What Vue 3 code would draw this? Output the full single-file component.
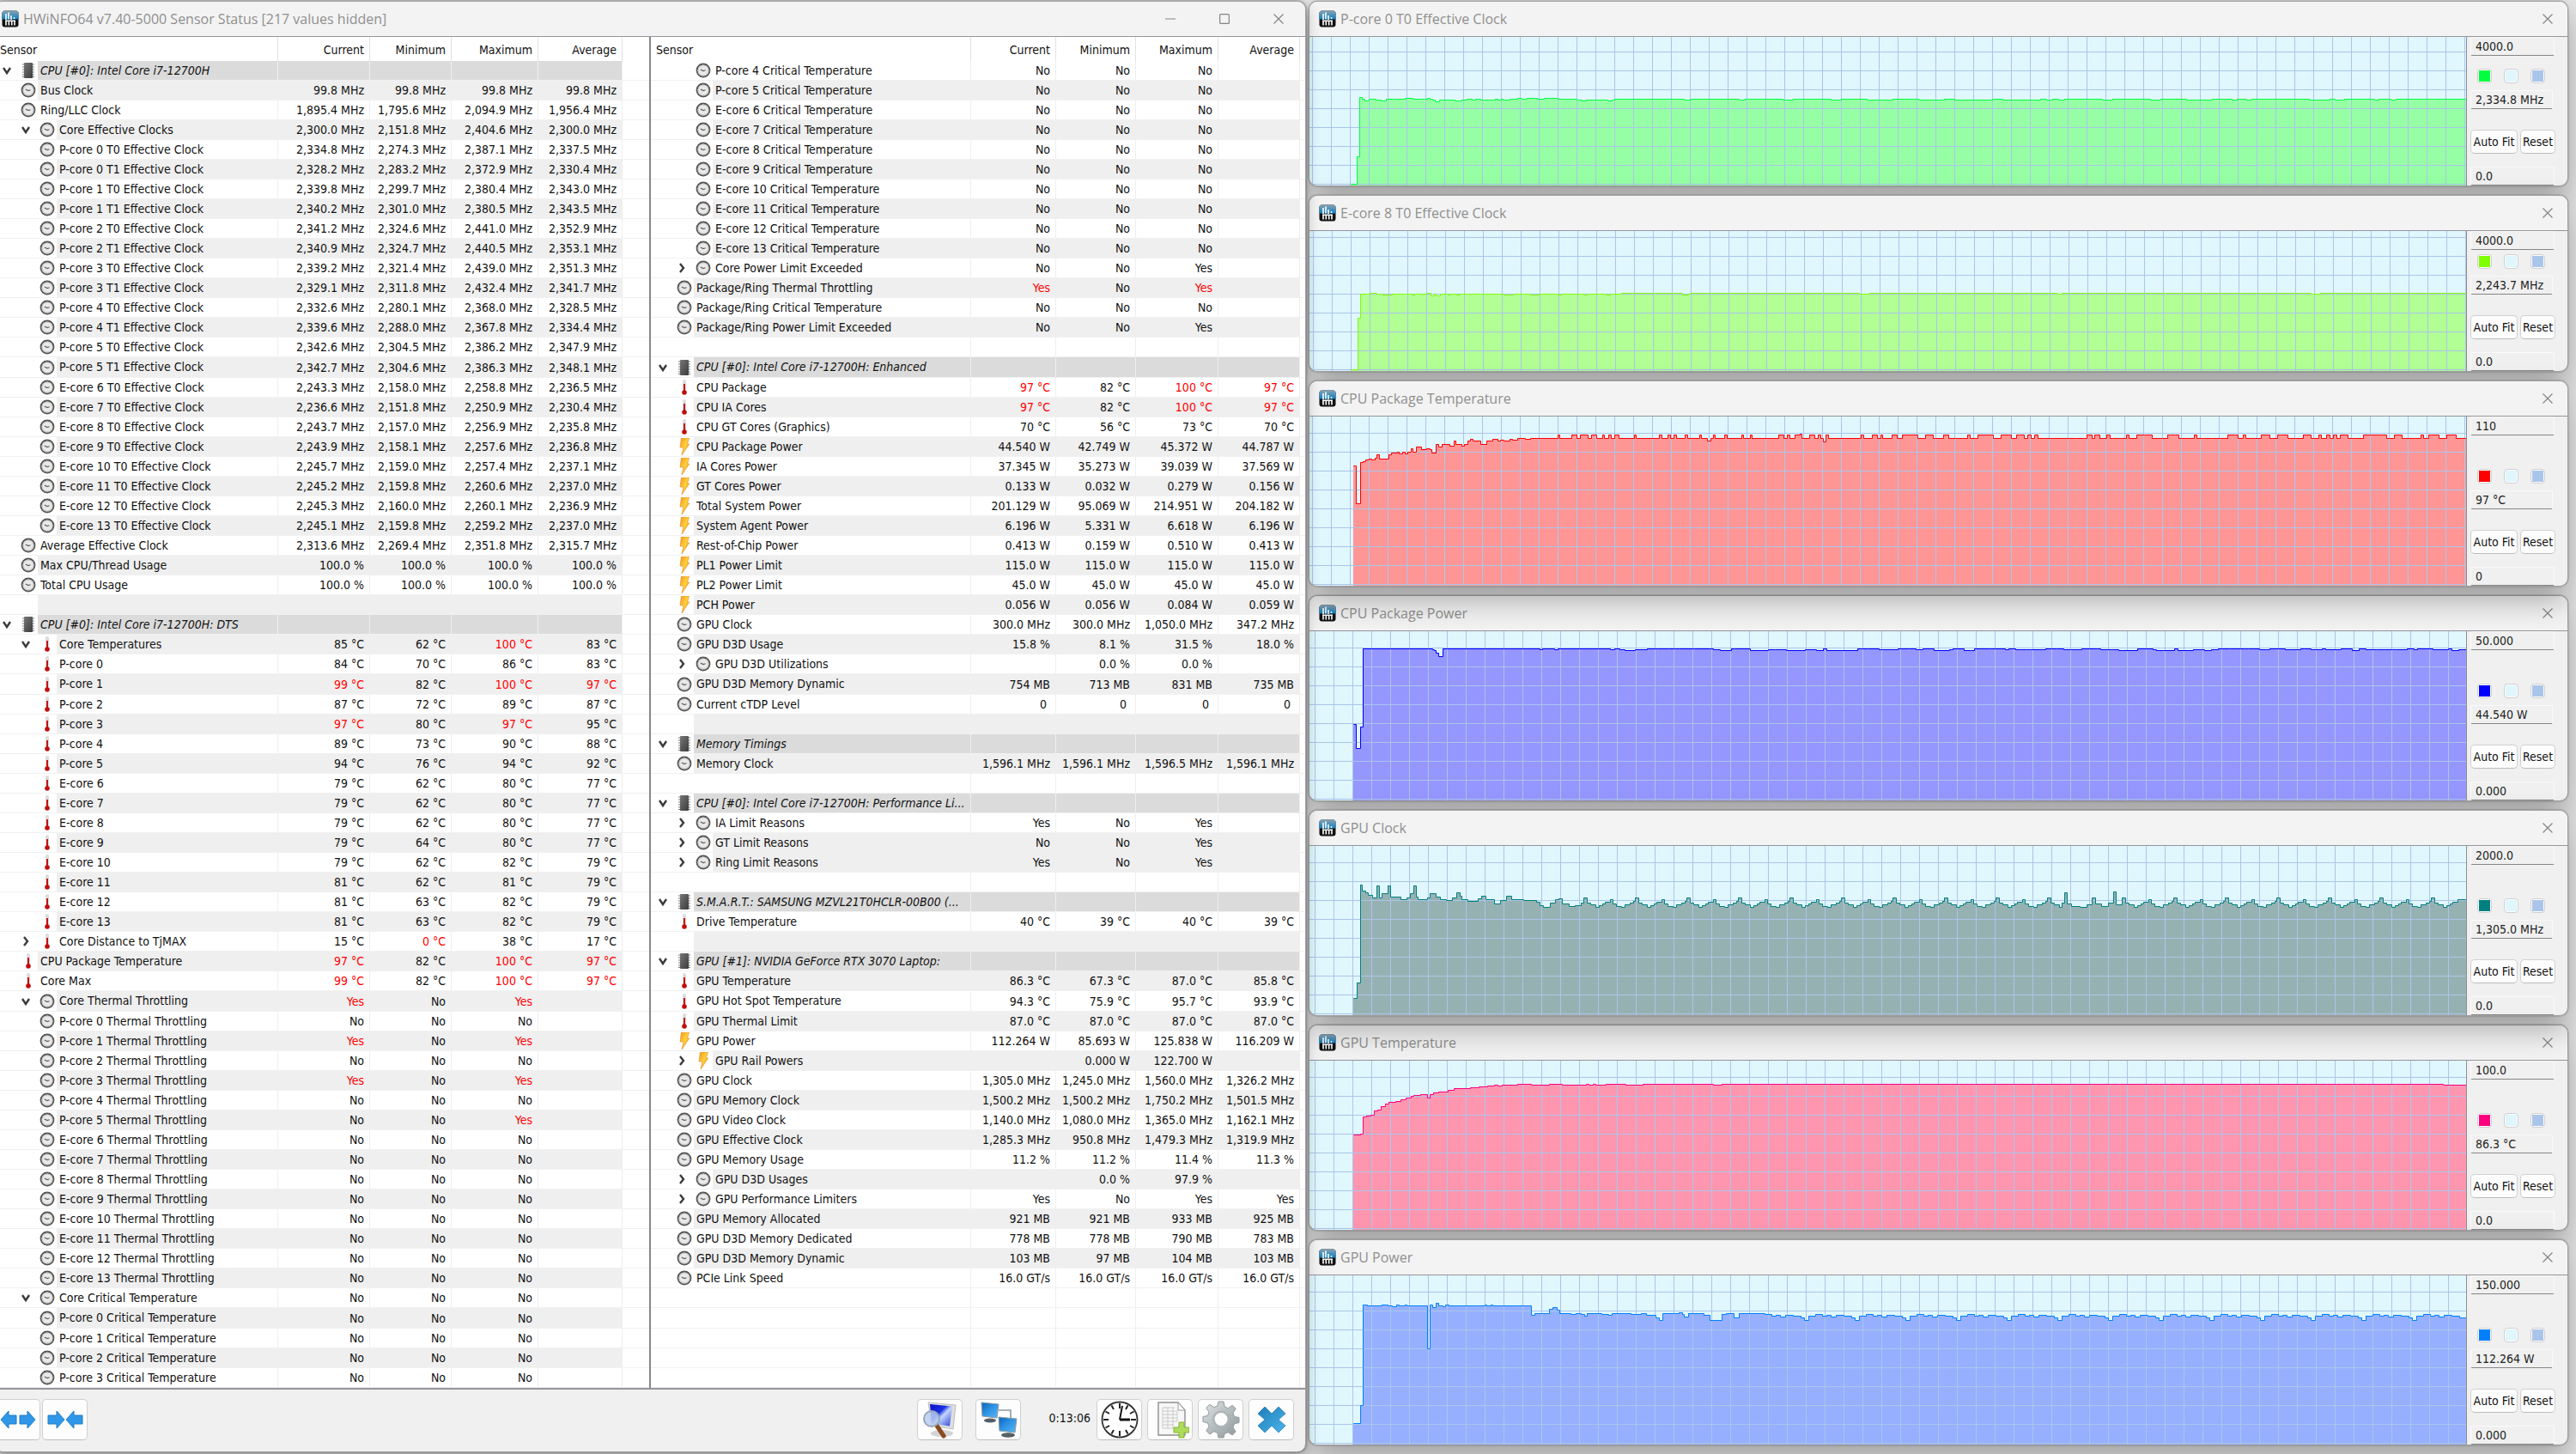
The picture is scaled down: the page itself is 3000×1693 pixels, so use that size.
<script setup>
const ICONS = { c: 'clock', t: 'thermo', b: 'bolt', h: 'chip' }

// Row notation: level, toggle (v open, > closed, - none), icon, label | values; "!" marks a limit value,
// "=" keeps the stripe of the row before.
function parse(lines) {
  let shade = true
  return lines.map((line) => {
    const repeat = line[0] === '='
    if (!repeat) shade = !shade
    const text = repeat ? line.slice(1) : line
    if (!text) return { empty: true, shade, values: ['', '', '', ''] }
    const [head, ...cells] = text.split('|')
    const values = [0, 1, 2, 3].map((i) => cells[i] || '')
    return {
      level: Number(head[0]),
      toggle: head[1],
      icon: ICONS[head[2]],
      section: head[2] === 'h',
      label: head.slice(4),
      shade,
      values
    }
  })
}

const no = '|No|No|No'
const leftRows = parse([
  '0vh CPU [#0]: Intel Core i7-12700H',
  '0-c Bus Clock|99.8 MHz|99.8 MHz|99.8 MHz|99.8 MHz',
  '0-c Ring/LLC Clock|1,895.4 MHz|1,795.6 MHz|2,094.9 MHz|1,956.4 MHz',
  '1vc Core Effective Clocks|2,300.0 MHz|2,151.8 MHz|2,404.6 MHz|2,300.0 MHz',
  '1-c P-core 0 T0 Effective Clock|2,334.8 MHz|2,274.3 MHz|2,387.1 MHz|2,337.5 MHz',
  '1-c P-core 0 T1 Effective Clock|2,328.2 MHz|2,283.2 MHz|2,372.9 MHz|2,330.4 MHz',
  '1-c P-core 1 T0 Effective Clock|2,339.8 MHz|2,299.7 MHz|2,380.4 MHz|2,343.0 MHz',
  '1-c P-core 1 T1 Effective Clock|2,340.2 MHz|2,301.0 MHz|2,380.5 MHz|2,343.5 MHz',
  '1-c P-core 2 T0 Effective Clock|2,341.2 MHz|2,324.6 MHz|2,441.0 MHz|2,352.9 MHz',
  '1-c P-core 2 T1 Effective Clock|2,340.9 MHz|2,324.7 MHz|2,440.5 MHz|2,353.1 MHz',
  '1-c P-core 3 T0 Effective Clock|2,339.2 MHz|2,321.4 MHz|2,439.0 MHz|2,351.3 MHz',
  '1-c P-core 3 T1 Effective Clock|2,329.1 MHz|2,311.8 MHz|2,432.4 MHz|2,341.7 MHz',
  '1-c P-core 4 T0 Effective Clock|2,332.6 MHz|2,280.1 MHz|2,368.0 MHz|2,328.5 MHz',
  '1-c P-core 4 T1 Effective Clock|2,339.6 MHz|2,288.0 MHz|2,367.8 MHz|2,334.4 MHz',
  '1-c P-core 5 T0 Effective Clock|2,342.6 MHz|2,304.5 MHz|2,386.2 MHz|2,347.9 MHz',
  '1-c P-core 5 T1 Effective Clock|2,342.7 MHz|2,304.6 MHz|2,386.3 MHz|2,348.1 MHz',
  '1-c E-core 6 T0 Effective Clock|2,243.3 MHz|2,158.0 MHz|2,258.8 MHz|2,236.5 MHz',
  '1-c E-core 7 T0 Effective Clock|2,236.6 MHz|2,151.8 MHz|2,250.9 MHz|2,230.4 MHz',
  '1-c E-core 8 T0 Effective Clock|2,243.7 MHz|2,157.0 MHz|2,256.9 MHz|2,235.8 MHz',
  '1-c E-core 9 T0 Effective Clock|2,243.9 MHz|2,158.1 MHz|2,257.6 MHz|2,236.8 MHz',
  '1-c E-core 10 T0 Effective Clock|2,245.7 MHz|2,159.0 MHz|2,257.4 MHz|2,237.1 MHz',
  '1-c E-core 11 T0 Effective Clock|2,245.2 MHz|2,159.8 MHz|2,260.6 MHz|2,237.0 MHz',
  '1-c E-core 12 T0 Effective Clock|2,245.3 MHz|2,160.0 MHz|2,260.1 MHz|2,236.9 MHz',
  '1-c E-core 13 T0 Effective Clock|2,245.1 MHz|2,159.8 MHz|2,259.2 MHz|2,237.0 MHz',
  '0-c Average Effective Clock|2,313.6 MHz|2,269.4 MHz|2,351.8 MHz|2,315.7 MHz',
  '0-c Max CPU/Thread Usage|100.0 %|100.0 %|100.0 %|100.0 %',
  '0-c Total CPU Usage|100.0 %|100.0 %|100.0 %|100.0 %',
  '',
  '0vh CPU [#0]: Intel Core i7-12700H: DTS',
  '1vt Core Temperatures|85 °C|62 °C|!100 °C|83 °C',
  '1-t P-core 0|84 °C|70 °C|86 °C|83 °C',
  '1-t P-core 1|!99 °C|82 °C|!100 °C|!97 °C',
  '1-t P-core 2|87 °C|72 °C|89 °C|87 °C',
  '1-t P-core 3|!97 °C|80 °C|!97 °C|95 °C',
  '1-t P-core 4|89 °C|73 °C|90 °C|88 °C',
  '1-t P-core 5|94 °C|76 °C|94 °C|92 °C',
  '1-t E-core 6|79 °C|62 °C|80 °C|77 °C',
  '1-t E-core 7|79 °C|62 °C|80 °C|77 °C',
  '1-t E-core 8|79 °C|62 °C|80 °C|77 °C',
  '1-t E-core 9|79 °C|64 °C|80 °C|77 °C',
  '1-t E-core 10|79 °C|62 °C|82 °C|79 °C',
  '1-t E-core 11|81 °C|62 °C|81 °C|79 °C',
  '1-t E-core 12|81 °C|63 °C|82 °C|79 °C',
  '1-t E-core 13|81 °C|63 °C|82 °C|79 °C',
  '1>t Core Distance to TjMAX|15 °C|!0 °C|38 °C|17 °C',
  '0-t CPU Package Temperature|!97 °C|82 °C|!100 °C|!97 °C',
  '0-t Core Max|!99 °C|82 °C|!100 °C|!97 °C',
  '1vc Core Thermal Throttling|!Yes|No|!Yes',
  '1-c P-core 0 Thermal Throttling' + no,
  '1-c P-core 1 Thermal Throttling|!Yes|No|!Yes',
  '1-c P-core 2 Thermal Throttling' + no,
  '1-c P-core 3 Thermal Throttling|!Yes|No|!Yes',
  '1-c P-core 4 Thermal Throttling' + no,
  '1-c P-core 5 Thermal Throttling|No|No|!Yes',
  ...[6, 7, 8, 9, 10, 11, 12, 13].map((n) => `1-c E-core ${n} Thermal Throttling${no}`),
  '1vc Core Critical Temperature' + no,
  ...[0, 1, 2, 3].map((n) => `1-c P-core ${n} Critical Temperature${no}`)
])

const rightRows = parse([
  ...[4, 5].map((n) => `1-c P-core ${n} Critical Temperature${no}`),
  ...[6, 7, 8, 9, 10, 11, 12, 13].map((n) => `1-c E-core ${n} Critical Temperature${no}`),
  '1>c Core Power Limit Exceeded|No|No|Yes',
  '0-c Package/Ring Thermal Throttling|!Yes|No|!Yes',
  '0-c Package/Ring Critical Temperature' + no,
  '0-c Package/Ring Power Limit Exceeded|No|No|Yes',
  '',
  '0vh CPU [#0]: Intel Core i7-12700H: Enhanced',
  '0-t CPU Package|!97 °C|82 °C|!100 °C|!97 °C',
  '0-t CPU IA Cores|!97 °C|82 °C|!100 °C|!97 °C',
  '0-t CPU GT Cores (Graphics)|70 °C|56 °C|73 °C|70 °C',
  '0-b CPU Package Power|44.540 W|42.749 W|45.372 W|44.787 W',
  '0-b IA Cores Power|37.345 W|35.273 W|39.039 W|37.569 W',
  '0-b GT Cores Power|0.133 W|0.032 W|0.279 W|0.156 W',
  '0-b Total System Power|201.129 W|95.069 W|214.951 W|204.182 W',
  '0-b System Agent Power|6.196 W|5.331 W|6.618 W|6.196 W',
  '0-b Rest-of-Chip Power|0.413 W|0.159 W|0.510 W|0.413 W',
  '0-b PL1 Power Limit|115.0 W|115.0 W|115.0 W|115.0 W',
  '0-b PL2 Power Limit|45.0 W|45.0 W|45.0 W|45.0 W',
  '0-b PCH Power|0.056 W|0.056 W|0.084 W|0.059 W',
  '0-c GPU Clock|300.0 MHz|300.0 MHz|1,050.0 MHz|347.2 MHz',
  '0-c GPU D3D Usage|15.8 %|8.1 %|31.5 %|18.0 %',
  '1>c GPU D3D Utilizations||0.0 %|0.0 %',
  '0-c GPU D3D Memory Dynamic|754 MB|713 MB|831 MB|735 MB',
  '0-c Current cTDP Level|0\u00a0|0\u00a0|0\u00a0|0\u00a0',
  '',
  '0vh Memory Timings',
  '0-c Memory Clock|1,596.1 MHz|1,596.1 MHz|1,596.5 MHz|1,596.1 MHz',
  '',
  '0vh CPU [#0]: Intel Core i7-12700H: Performance Li...',
  '1>c IA Limit Reasons|Yes|No|Yes',
  '1>c GT Limit Reasons|No|No|Yes',
  '=1>c Ring Limit Reasons|Yes|No|Yes',
  '',
  '0vh S.M.A.R.T.: SAMSUNG MZVL21T0HCLR-00B00 (...',
  '0-t Drive Temperature|40 °C|39 °C|40 °C|39 °C',
  '',
  '0vh GPU [#1]: NVIDIA GeForce RTX 3070 Laptop:',
  '0-t GPU Temperature|86.3 °C|67.3 °C|87.0 °C|85.8 °C',
  '0-t GPU Hot Spot Temperature|94.3 °C|75.9 °C|95.7 °C|93.9 °C',
  '0-t GPU Thermal Limit|87.0 °C|87.0 °C|87.0 °C|87.0 °C',
  '0-b GPU Power|112.264 W|85.693 W|125.838 W|116.209 W',
  '1>b GPU Rail Powers||0.000 W|122.700 W',
  '0-c GPU Clock|1,305.0 MHz|1,245.0 MHz|1,560.0 MHz|1,326.2 MHz',
  '0-c GPU Memory Clock|1,500.2 MHz|1,500.2 MHz|1,750.2 MHz|1,501.5 MHz',
  '0-c GPU Video Clock|1,140.0 MHz|1,080.0 MHz|1,365.0 MHz|1,162.1 MHz',
  '0-c GPU Effective Clock|1,285.3 MHz|950.8 MHz|1,479.3 MHz|1,319.9 MHz',
  '0-c GPU Memory Usage|11.2 %|11.2 %|11.4 %|11.3 %',
  '1>c GPU D3D Usages||0.0 %|97.9 %',
  '1>c GPU Performance Limiters|Yes|No|Yes|Yes',
  '0-c GPU Memory Allocated|921 MB|921 MB|933 MB|925 MB',
  '0-c GPU D3D Memory Dedicated|778 MB|778 MB|790 MB|783 MB',
  '0-c GPU D3D Memory Dynamic|103 MB|97 MB|104 MB|103 MB',
  '0-c PCIe Link Speed|16.0 GT/s|16.0 GT/s|16.0 GT/s|16.0 GT/s'
])
// Unused rows at the foot of the list show grid lines only.
const spare = Array.from({ length: 5 }, () => ({ empty: true, shade: false, values: ['', '', '', ''] }))

const panes = [
  { id: 'left', rows: leftRows },
  { id: 'right', rows: [...rightRows, ...spare] }
]
const columns = ['Current', 'Minimum', 'Maximum', 'Average']

// Samples of a steady reading: [x, y] steps that move between nearby levels.
function steady(from, to, levels, gaps, seed) {
  const out = []
  let x = from
  let s = seed
  while (x < to) {
    s = (s * 1103 + 12345) % 65536
    out.push([x, levels[s % levels.length]])
    x += gaps[(s >> 5) % gaps.length]
  }
  return out
}
// A shape that repeats at a fixed period.
function waves(from, to, shape, period) {
  const out = []
  for (let x = from; x < to; x += period) {
    for (const [dx, y] of shape) if (x + dx < to) out.push([x + dx, y])
  }
  return out
}
const pairs = (text) => text.split(' ').map((p) => p.split(',').map(Number))

const W = 1347
function build(points, h) {
  let line = `M${points[0][0]} ${points[0][1]}`
  for (let i = 1; i < points.length; i++) line += `H${points[i][0]}V${points[i][1]}`
  line += `H${W}`
  return { line, area: `${line}V${h}H${points[0][0]}Z` }
}

const clockWave = [[0, 60], [4, 66], [8, 68], [14, 71], [18, 69], [22, 67], [25, 65], [31, 62], [34, 67], [38, 70], [44, 71], [48, 68], [54, 66], [58, 64]]

const charts = [
  {
    title: 'P-core 0 T0 Effective Clock', size: 'medium', h: 173, top: '4000.0', now: '2,334.8 MHz', low: '0.0',
    color: '#00ff40', fill: '#96ffa5', shift: 1,
    points: [
      ...pairs('48,171 55,139 58,70 61,72 64,74 69,72 77,73 83,74 89,72 111,71 120,72 137,71 140,72 143,73 146,75 151,73 169,74 177,73 183,72 189,73 193,72 199,73 216,72 219,73 223,72 225,73 233,72 242,71 247,72 253,71 265,72 273,71 289,72 311,73 317,74 322,73 347,74 352,73 355,72 436,73 444,72'),
      ...steady(500, 1060, [72, 72, 73, 72], [7, 12, 30, 44], 11),
      ...pairs('1074,73 1080,72 1091,73 1097,72 1164,73 1188,72 1194,73 1205,72 1240,73 1245,72 1259,73 1265,72')
    ]
  },
  {
    title: 'E-core 8 T0 Effective Clock', size: 'short', h: 163, top: '4000.0', now: '2,243.7 MHz', low: '0.0',
    color: '#80ff00', fill: '#b2ff95', shift: 0,
    points: pairs('49,161 56,101 59,73 70,72 78,73 85,74 96,73 119,74 122,73 136,72 141,75 145,73 147,75 152,73 161,74 164,73 171,74 175,73 226,74 237,73 257,74 267,73 289,74 293,73 319,74 323,73 346,74 350,73 363,72 434,74 441,73 443,72 640,73 652,72 870,73 876,72 1166,73 1177,72')
  },
  {
    title: 'CPU Package Temperature', size: 'tall', h: 197, top: '110', now: '97 °C', low: '0',
    color: '#ff0000', fill: '#ff9696', shift: 1,
    points: [
      ...pairs('51,57 54,101 59,53 62,52 65,50 69,49 72,50 76,48 78,44 81,49 92,44 95,42 102,41 104,43 108,41 111,43 114,41 118,37 120,41 124,35 130,38 136,37 140,38 142,42 147,32 150,35 154,32 163,34 168,28 170,32 177,34 180,32 184,28 187,26 190,28 199,32 206,28 213,26 219,28 222,27 226,28 233,26 236,27 242,25 251,26 257,25 289,21 291,25 305,21 311,25 315,21 324,25 328,21 334,25 341,21 343,25 348,21 351,25 355,21 360,25 378,21 380,25 407,21 410,25 417,21 420,25 424,21 427,25 437,21 440,25 454,21 456,25 463,28 467,25 470,21 472,25 483,21 486,25 503,21 505,25 513,21 515,25 546,21 552,25 556,21 559,25 565,21 571,20 573,25 582,21 588,25 592,21 595,25 598,29 601,21 604,25 642,21 645,25 655,21 661,25 665,21 667,25 678,21 684,25'),
      ...steady(690, 1330, [25, 21, 25, 21, 25], [3, 4, 6, 9], 7),
      [1335, 25]
    ]
  },
  {
    title: 'CPU Package Power', size: 'tall', h: 197, top: '50.000', now: '44.540 W', low: '0.000', under: true,
    color: '#0000ff', fill: '#9696ff', shift: 20,
    points: [
      ...pairs('51,108 54,136 59,111 62,20 143,21 145,22 147,25 150,29 155,20 268,21 271,20 285,21 289,20 350,21 355,20 361,21 367,22 379,21 393,20'),
      ...steady(405, 1340, [20, 21, 21, 22, 20], [4, 8, 13, 18], 5)
    ]
  },
  {
    title: 'GPU Clock', size: 'tall', h: 197, top: '2000.0', now: '1,305.0 MHz', low: '0.0',
    color: '#008080', fill: '#96b1b1', shift: 20,
    points: [
      ...pairs('51,177 55,159 59,45 61,52 65,54 68,57 73,60 78,46 81,60 84,55 91,46 94,59 106,62 113,60 117,55 121,46 124,59 126,62 137,60 140,55 147,59 152,62 159,63 166,60 171,54 175,58 177,62 184,64 196,61 200,58 205,62 215,67 222,63 229,58 235,62 249,63 264,65 268,69 272,71 280,66 286,62 290,61 294,67 302,70 309,69 316,66'),
      ...waves(319, 876, clockWave, 60),
      ...pairs('876,66 879,54 882,67 887,70 897,71 905,68 911,60 915,67 922,70 930,66 936,53 939,68'),
      ...waves(946, 1340, clockWave, 60)
    ]
  },
  {
    title: 'GPU Temperature', size: 'tall', h: 197, top: '100.0', now: '86.3 °C', low: '0.0', under: true,
    color: '#ff0080', fill: '#ff96b0', shift: 20,
    points: [
      ...pairs('51,86 59,85 62,65 66,64 71,63 75,58 79,57 83,53 88,50 92,48 100,47 106,45 112,43 118,41 121,40 129,39 137,43 140,39 144,37 150,36 161,34 168,32 187,31 197,30 207,29 215,28 219,29 224,28 242,27 258,28 279,27 294,28 322,27 325,28 330,27 333,28 345,27 368,28 388,27 470,28 480,27'),
      ...steady(560, 1300, [27, 28, 27, 27], [6, 11, 16, 22], 3),
      [1320, 28]
    ]
  },
  {
    title: 'GPU Power', size: 'tall', h: 197, top: '150.000', now: '112.264 W', low: '0.000',
    color: '#0080ff', fill: '#96b0ff', shift: 20,
    points: [
      ...pairs('51,172 59,151 62,34 67,35 84,34 91,35 96,36 101,34 104,35 111,34 113,35 137,85 140,34 143,37 147,32 150,35 155,36 158,34 162,35 204,34 206,35 211,34 213,35 258,46 262,44 279,39 283,37 288,40 291,44 304,45 310,44 316,45 320,47 323,44 340,45 348,46 352,44 374,45 386,44 392,46 403,49 407,52 411,44 430,43 434,45 436,48 441,44 459,46 466,52 480,45 485,44 494,49 500,44'),
      ...waves(530, 1340, [[0, 45], [8, 47], [13, 46], [18, 48], [24, 46], [33, 47], [42, 49], [46, 52], [51, 47]], 59)
    ]
  }
].map((c) => ({ ...c, ...build(c.points, c.h) }))
</script>

<template>
  <div class="desktop">
    <svg class="defs" aria-hidden="true">
      <defs>
        <linearGradient id="g-top" x1="0" y1="0" x2="0" y2="1"><stop offset="0" stop-color="#8aa3b5" /><stop offset="1" stop-color="#0b7fc0" /></linearGradient>
        <linearGradient id="g-chip" x1="0" y1="0" x2="1" y2="1"><stop offset="0" stop-color="#777" /><stop offset="1" stop-color="#3c3c3c" /></linearGradient>
        <linearGradient id="g-bolt" x1="0" y1="0" x2="1" y2="1"><stop offset="0" stop-color="#f7931e" /><stop offset="0.5" stop-color="#ffd23c" /><stop offset="1" stop-color="#e8850c" /></linearGradient>
        <linearGradient id="g-screen" x1="0" y1="0" x2="1" y2="1"><stop offset="0" stop-color="#0a62b8" /><stop offset="0.5" stop-color="#2f95e6" /><stop offset="1" stop-color="#5db8f5" /></linearGradient>
        <linearGradient id="g-navy" x1="0" y1="0" x2="1" y2="1"><stop offset="0" stop-color="#0a12c8" /><stop offset="0.4" stop-color="#1a2fe0" /><stop offset="0.55" stop-color="#c5d6ff" /><stop offset="1" stop-color="#2740d8" /></linearGradient>
        <linearGradient id="g-metal" x1="0" y1="0" x2="1" y2="1"><stop offset="0" stop-color="#dfe3e5" /><stop offset="1" stop-color="#8d9699" /></linearGradient>
        <linearGradient id="g-cross" x1="0" y1="0" x2="1" y2="1"><stop offset="0" stop-color="#1b7db8" /><stop offset="1" stop-color="#4db4ea" /></linearGradient>
      </defs>
      <symbol id="i-logo" viewBox="0 0 20 20">
        <rect x="0.5" y="0.5" width="19" height="19" rx="3" fill="#111" />
        <path d="M0.5 10.5V3.5a3 3 0 0 1 3-3h13a3 3 0 0 1 3 3v7z" fill="url(#g-top)" />
        <path d="M5 4v7M8 2.5v8M11 6v5M14.5 8v2" stroke="#fff" stroke-width="1.6" />
        <path d="M4 12.2h12M5 12v5.500M8.300 12v5.500M11.700 12v5.500M15 12v5.500" stroke="#fff" stroke-width="1.6" />
      </symbol>
      <symbol id="i-clock" viewBox="0 0 18 18">
        <circle cx="9" cy="9" r="7.5" fill="#e9e9e9" stroke="#555" stroke-width="1.8" />
        <circle cx="9" cy="9" r="6" fill="none" stroke="#bbb" stroke-width="0.8" />
        <path d="M5.8 8l3.2 1.6 2.6-.8" fill="none" stroke="#6b5a55" stroke-width="1.2" />
      </symbol>
      <symbol id="i-thermo" viewBox="0 0 18 18">
        <rect x="7" y="0" width="4" height="14" rx="2" fill="#dcdcdc" />
        <rect x="8" y="5" width="2" height="10" fill="#c81414" />
        <circle cx="9" cy="15" r="2.8" fill="#c00d0d" />
      </symbol>
      <symbol id="i-bolt" viewBox="0 0 18 20">
        <path d="M5.500 0h9L12.500 7h2.200L6 20l2-9H4z" fill="url(#g-bolt)" stroke="#e2922a" stroke-width="0.7" />
      </symbol>
      <symbol id="i-chip" viewBox="0 0 18 18">
        <path d="M2 2h14M2 5h14M2 8h14M2 11h14M2 14h14M2 16.5h14" stroke="#777" stroke-width="1.2" />
        <rect x="4" y="0" width="10" height="18" rx="1" fill="url(#g-chip)" />
      </symbol>
      <symbol id="i-open" viewBox="0 0 12 12"><path d="M2 3l4 6 4-6" fill="none" stroke="#3a3a3a" stroke-width="2.4" /></symbol>
      <symbol id="i-closed" viewBox="0 0 12 12"><path d="M4 1l4 5-4 5" fill="none" stroke="#3a3a3a" stroke-width="2.4" /></symbol>
      <symbol id="i-close" viewBox="0 0 12 12"><path d="M0.5 0.5l11 11M11.5 0.5l-11 11" fill="none" stroke="#858585" stroke-width="1.2" /></symbol>
    </svg>

    <section class="window main">
      <header class="titlebar">
        <svg class="app-icon"><use href="#i-logo" /></svg>
        <h1>HWiNFO64 v7.40-5000 Sensor Status [217 values hidden]</h1>
        <button class="wide" aria-label="Minimize"><svg viewBox="0 0 12 12"><path d="M0 6h12" stroke="#858585" stroke-width="1.2" /></svg></button>
        <button class="wide" aria-label="Maximize"><svg viewBox="0 0 12 12"><rect x="0.6" y="0.6" width="10.8" height="10.8" rx="1" fill="none" stroke="#858585" stroke-width="1.2" /></svg></button>
        <button class="wide" aria-label="Close"><svg><use href="#i-close" /></svg></button>
      </header>

      <div class="panes">
        <div v-for="pane in panes" :key="pane.id" class="pane" :class="pane.id">
          <table>
            <colgroup><col class="c-name" /><col class="c-cur" /><col class="c-min" /><col class="c-max" /><col class="c-avg" /><col /></colgroup>
            <thead>
              <tr><th class="first">Sensor</th><th v-for="c in columns" :key="c">{{ c }}</th><th class="rest"></th></tr>
            </thead>
            <tbody>
              <tr v-for="(row, i) in pane.rows" :key="i" :class="{ shade: row.shade, section: row.section }">
                <td class="name">
                  <div class="cell">
                    <span v-if="row.level" class="indent"></span>
                    <span class="toggle">
                      <svg v-if="row.toggle === 'v'"><use href="#i-open" /></svg>
                      <svg v-if="row.toggle === '>'"><use href="#i-closed" /></svg>
                    </span>
                    <span class="icon"><svg v-if="row.icon" :class="row.icon"><use :href="'#i-' + row.icon" /></svg></span>
                    <span class="label">{{ row.label }}</span>
                  </div>
                </td>
                <td v-for="(v, k) in row.values" :key="k" :class="{ hot: v[0] === '!' }">{{ v[0] === '!' ? v.slice(1) : v }}</td>
                <td class="rest"></td>
              </tr>
            </tbody>
          </table>
        </div>
      </div>

      <footer class="toolbar">
        <button class="tight" aria-label="Expand columns">
          <svg viewBox="0 0 44 40" fill="#2f97e8" stroke="#1f7cc6"><path d="M2 20l9-10v5h9v10h-9v5zM42 20l-9-10v5h-9v10h9v5z" /></svg>
        </button>
        <button class="tight" aria-label="Shrink columns">
          <svg viewBox="0 0 44 40" fill="#2f97e8" stroke="#1f7cc6"><path d="M21 20l-9-10v5H2v10h10v5zM23 20l9-10v5h10v10H32v5z" /></svg>
        </button>
        <span class="space"></span>
        <button class="apart" aria-label="System summary">
          <svg viewBox="0 0 44 44">
            <ellipse cx="24" cy="38" rx="13" ry="4" fill="#d4d4d4" />
            <path d="M8 2l32 3-3 28-25-4z" fill="#dedede" stroke="#bdbdbd" />
            <path d="M10 4l26 2.5-3 23-21-3z" fill="url(#g-navy)" />
            <path d="M18 29l8 12" stroke="#8a4b22" stroke-width="5" stroke-linecap="round" />
            <circle cx="12" cy="21" r="9" fill="#b9cdf2" fill-opacity="0.85" stroke="#98a7b8" stroke-width="2" />
          </svg>
        </button>
        <button aria-label="Remote monitoring">
          <svg viewBox="0 0 44 44">
            <path d="M22 11h14v10" fill="none" stroke="#8b9ba2" stroke-width="1.6" />
            <ellipse cx="12" cy="23" rx="7" ry="2.5" fill="#555f66" />
            <path d="M2 2l20 2-2 16-17-2z" fill="url(#g-screen)" stroke="#8d9aa3" />
            <ellipse cx="33" cy="40" rx="8" ry="2.8" fill="#555f66" />
            <path d="M22 19l21 2-2 16-18-2z" fill="url(#g-screen)" stroke="#8d9aa3" />
          </svg>
        </button>
        <time>0:13:06</time>
        <button aria-label="Reset clock">
          <svg viewBox="0 0 44 44">
            <circle cx="22" cy="22" r="20.5" fill="#fff" stroke="#333" stroke-width="1.8" />
            <path d="M22 3v6M22 35v6M3 22h6M35 22h6M12.5 5.5l2.500 4.500M31.5 5.5L29 10M5.5 12.5l4.5 2.5M38.5 12.5L34 15M5.5 31.5L10 29M38.5 31.5L34 29M12.5 38.5L15 34M31.5 38.5L29 34" stroke="#222" stroke-width="2" />
            <path d="M22 22l3-16" stroke="#111" stroke-width="2" /><path d="M22 22h12" stroke="#111" stroke-width="3.2" />
          </svg>
        </button>
        <button aria-label="Log to file">
          <svg viewBox="0 0 44 44">
            <path d="M8 2h23l8 9v29H8z" fill="#f7f7f7" stroke="#8f8f8f" stroke-width="1.4" />
            <path d="M31 2v9h8z" fill="#fff" stroke="#9a9a9a" />
            <path d="M13 8h14M13 12h17M13 16h17M13 20h17M13 24h17M13 28h13M13 32h12M13 8v24M19 8v24M25 8v24M30 12v12" stroke="#c9c9c9" fill="none" />
            <path d="M32 25h6v6h6v6h-6v6h-6v-6h-6v-6h6z" fill="#b0dc5c" stroke="#82b436" />
          </svg>
        </button>
        <button aria-label="Settings">
          <svg viewBox="0 0 44 44">
            <path d="M19 1h6l1.2 6 4 1.7 5-3.4 4 4-3.3 5 1.7 4.2 5.4 1v6l-5.4 1.3-1.7 4.2 3.3 5-4 4-5-3.3-4 1.7L25 43h-6l-1.200-5.600-4-1.700-5 3.300-4-4 3.300-5L6.400 25.800 1 24.500v-6l5.400-1 1.700-4.200-3.300-5 4-4 5 3.400 4-1.700z" fill="url(#g-metal)" stroke="#92999b" />
            <circle cx="22" cy="21.5" r="10" fill="#aeb4b6" /><circle cx="22" cy="21.5" r="7.5" fill="#fff" />
          </svg>
        </button>
        <button aria-label="Close sensors">
          <svg viewBox="0 0 44 44"><path d="M14 7l8 8 8-8 8 8-8 7 8 7-8 8-8-8-8 8-8-8 8-7-8-7z" fill="url(#g-cross)" stroke="#2a7fb3" stroke-width="0.8" /></svg>
        </button>
      </footer>
    </section>

    <div class="charts">
      <section v-for="(c, n) in charts" :key="c.title" class="window chart" :class="[c.size, { under: c.under }]">
        <header class="titlebar">
          <svg class="app-icon"><use href="#i-logo" /></svg>
          <h2>{{ c.title }}</h2>
          <button aria-label="Close"><svg><use href="#i-close" /></svg></button>
        </header>
        <div class="body">
          <div class="plot">
            <svg :viewBox="`0 0 ${W} ${c.h}`" preserveAspectRatio="none"><path :d="c.area" :fill="c.fill" /></svg>
            <div class="grid" :style="{ backgroundPosition: `right ${c.shift}px bottom 1px` }"></div>
            <svg :viewBox="`0 0 ${W} ${c.h}`" preserveAspectRatio="none"><path :d="c.line" fill="none" :stroke="c.color" stroke-width="1" vector-effect="non-scaling-stroke" transform="translate(0.5 0.5)" /></svg>
          </div>
          <div class="side">
            <input :id="`top-${n}`" class="box" type="text" :value="c.top" aria-label="Scale maximum" />
            <div class="swatches">
              <button aria-label="Graph color"><i :style="{ background: c.color }"></i></button>
              <button aria-label="Background color"><i class="sky"></i></button>
              <button aria-label="Grid color"><i class="steel"></i></button>
            </div>
            <input :id="`now-${n}`" class="box now" type="text" :value="c.now" aria-label="Current value" readonly />
            <div class="actions"><button class="fit">Auto Fit</button><button class="reset">Reset</button></div>
            <input :id="`low-${n}`" class="box" type="text" :value="c.low" aria-label="Scale minimum" />
          </div>
        </div>
      </section>
    </div>
  </div>
</template>

<style>
body {
  background: #e6e6e6;
  overflow-x: hidden;
}
</style>

<style scoped>
* { box-sizing: border-box; }
.desktop {
  display: grid;
  grid-template-columns: minmax(0, 1528fr) minmax(0, 1467fr);
  column-gap: 3px;
  margin: 0 9px 0 -7px;
  padding: 1px 0 2px;
  align-items: start;
  font-family: "DejaVu Sans Condensed", "DejaVu Sans", sans-serif;
  font-stretch: condensed;
  font-size: 14px;
  color: #111;
}
.defs { position: absolute; width: 0; height: 0; }
button { font: inherit; color: inherit; padding: 0; margin: 0; }
.window {
  background: #f0f0f0;
  border: 1px solid #a0a0a0;
  border-radius: 10px;
  overflow: hidden;
  box-shadow: 0 16px 36px rgba(0, 0, 0, 0.3), 0 0 2px rgba(0, 0, 0, 0.4);
  position: relative;
  z-index: 1;
}
.window.under { z-index: 0; }
.main { z-index: 2; box-shadow: 0 6px 16px rgba(0, 0, 0, 0.3), 0 0 3px rgba(0, 0, 0, 0.5); }
.titlebar {
  display: flex;
  align-items: center;
  height: 41px;
  background: #f3f3f3;
  border-bottom: 1px solid #95959b;
  padding-left: 11px;
}
.main .titlebar { padding-left: 8px; }
.app-icon { width: 20px; height: 20px; flex: none; margin-right: 5px; }
h1, h2 {
  flex: 1;
  margin: 0;
  font-family: "Open Sans", "Noto Sans", sans-serif;
  font-size: 16px;
  font-weight: 400;
  font-stretch: normal;
  color: #8f8f8f;
  white-space: nowrap;
}
.titlebar button {
  width: 46px;
  height: 38px;
  border: 0;
  background: none;
  display: flex;
  align-items: center;
  justify-content: center;
}
.titlebar button.wide { width: 63px; }
.titlebar button svg { width: 12px; height: 12px; }

.panes { display: flex; border-bottom: 2px solid #95959b; }
.pane { flex: 1 1 0; min-width: 0; background: #fff; }
.pane.left { border-right: 2px solid #86868c; }
table { width: 100%; table-layout: fixed; border-collapse: separate; border-spacing: 0; }
.left .c-name { width: 330px; }
.left .c-cur { width: 107px; }
.left .c-min { width: 95px; }
.left .c-max { width: 101px; }
.left .c-avg { width: 98px; }
.right .c-name { width: 373px; }
.right .c-cur { width: 99px; }
.right .c-min { width: 93px; }
.right .c-max { width: 96px; }
.right .c-avg { width: 95px; }
th {
  height: 28px;
  padding: 1px 6px 0 0;
  font-weight: 400;
  text-align: right;
  border-right: 1px solid #e2e2e2;
}
th.first { text-align: left; padding-left: 6px; }
td {
  height: 23px;
  padding: 0 6px 0 0;
  line-height: 22px;
  text-align: right;
  white-space: nowrap;
  border-right: 1px solid #efefef;
  border-bottom: 1px solid #f1f1f1;
}
tbody tr:nth-child(16n) td { height: 24px; }
.rest { border-right: 0; padding: 0; }
td.name { padding: 0; text-align: left; }
.cell { display: flex; height: 22px; }
tbody tr:nth-child(16n) .cell { height: 23px; }
.indent { width: 22px; flex: none; }
.toggle { width: 28px; flex: none; display: flex; align-items: center; justify-content: center; }
.toggle svg { width: 12px; height: 12px; }
.icon { width: 22px; flex: none; display: flex; align-items: center; justify-content: center; }
.icon svg { width: 18px; height: 18px; }
.icon svg.bolt { height: 20px; }
.label { flex: 1; min-width: 0; padding-left: 3px; overflow: hidden; }
.shade td:not(.rest):not(.name), .shade .label { background: #efefef; }
.section td:not(.rest):not(.name), .section .label { background: #dbdbdb; }
.section .label { font-style: italic; }
.hot { color: #f00; }

.toolbar { display: flex; align-items: center; padding: 11px 13px 13px 0; height: 72px; }
.toolbar button {
  width: 53px;
  height: 48px;
  margin-left: 6px;
  display: flex;
  align-items: center;
  justify-content: center;
  background: #fdfdfd;
  border: 1px solid #d0d0d0;
  border-bottom-color: #bcbcbc;
  border-radius: 5px;
}
.toolbar button.tight { margin: 0 2px 0 0; }
.toolbar button svg { width: 44px; height: 44px; }
.toolbar .space { flex: 1; }
.toolbar .apart { margin-right: 9px; }
.toolbar time { margin: 0 1px 4px 32px; }

.charts { display: flex; flex-direction: column; gap: 10px; min-width: 0; }
.chart.medium .body { height: 173px; }
.chart.short .body { height: 163px; }
.chart.tall .body { height: 197px; }
.body { display: flex; }
.plot {
  position: relative;
  flex: 1;
  min-width: 0;
  background: #e0f7fe;
  border-right: 1px solid #8f8f8f;
}
.plot svg, .grid { position: absolute; top: 0; left: 0; width: 100%; height: 100%; }
.grid {
  background-image: linear-gradient(to left, #abc5ea 1px, transparent 1px), linear-gradient(to top, #abc5ea 1px, transparent 1px);
  background-size: 22px 22px;
}
.side { width: 117px; flex: none; padding-left: 4px; display: flex; flex-direction: column; align-items: flex-start; }
.box {
  width: 98px;
  height: 22px;
  padding: 0 5px;
  font: inherit;
  color: #222;
  background: #f0f0f0;
  border: 1px solid #fafafa;
  border-bottom: 1px solid #868686;
  border-radius: 2px;
}
.box.now { width: 96px; margin-top: 8px; }
.swatches { display: flex; gap: 14px; margin: auto 0 0 8px; }
.swatches button {
  width: 17px;
  height: 17px;
  border: 1px solid #cfcfcf;
  border-radius: 4px;
  background: #fff;
  display: flex;
  align-items: center;
  justify-content: center;
}
.swatches i { width: 13px; height: 13px; }
.sky { background: #dff6fd; }
.steel { background: #abc5ea; }
.actions { display: flex; gap: 3px; margin: 24px 0 15px; }
.actions button {
  height: 28px;
  background: #fdfdfd;
  border: 1px solid #d0d0d0;
  border-bottom-color: #bcbcbc;
  border-radius: 5px;
  white-space: nowrap;
}
.actions .fit { width: 55px; }
.actions .reset { width: 41px; }
</style>
